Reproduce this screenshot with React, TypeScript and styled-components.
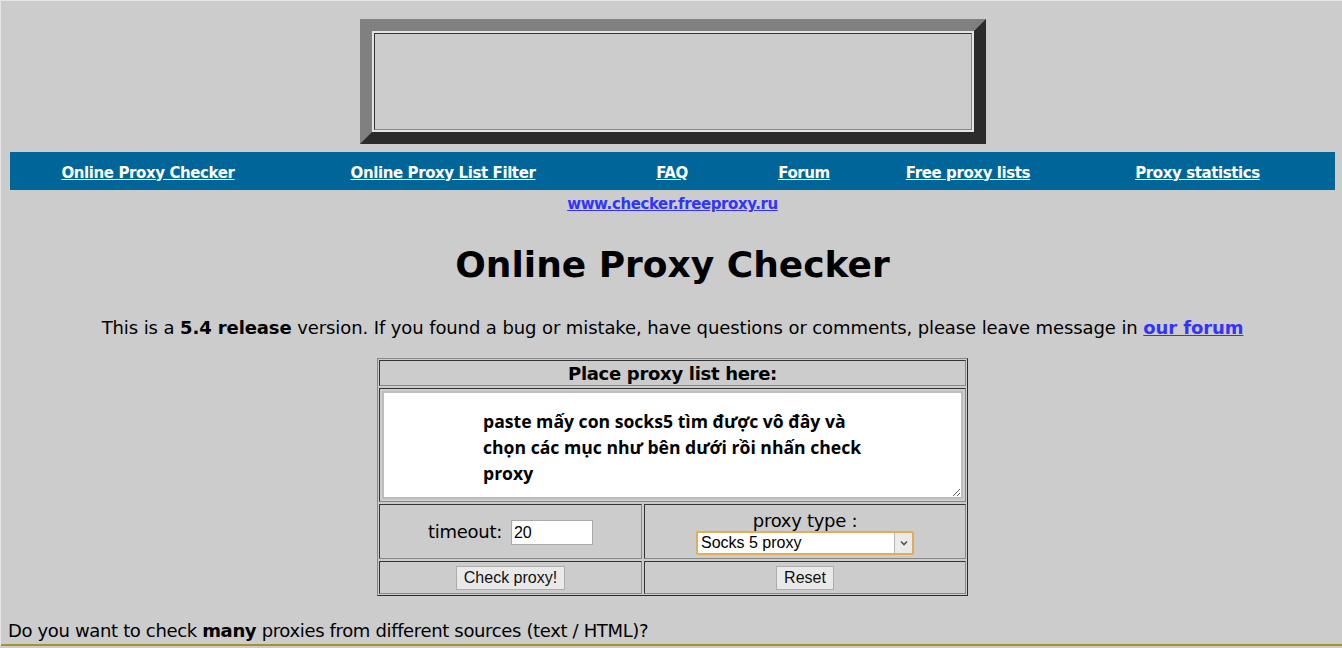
import React, { useState } from "react";
import styled, { createGlobalStyle } from "styled-components";

const GlobalStyle = createGlobalStyle`
    html, body {
        margin: 0;
        padding: 0;
        background: #cccccc;
    }
    body {
        font-family: "DejaVu Sans", Verdana, sans-serif;
        color: #000;
        border-left: 1px solid #e6e6e6;
        border-top: 1px solid #e6e6e6;
    }
`;

const StyledPage = styled.div`
    display: flex;
    flex-direction: column;
    align-items: center;
    padding: 18px 7px 0 9px;
`;

const StyledBanner = styled.div`
    width: 602px;
    height: 101px;
    border: 12px solid;
    border-color: #808080 #2b2b2b #2b2b2b #808080;
`;
const StyledBannerInner = styled.div`
    height: 100%;
    box-sizing: border-box;
    border: 2px solid #e4e4e4;
`;
const StyledBannerCell = styled.div`
    height: 100%;
    box-sizing: border-box;
    border: 1px solid;
    border-color: #333 #888 #888 #333;
`;

const StyledNav = styled.nav`
    align-self: stretch;
    margin-top: 8px;
    height: 38px;
    padding-right: 12px;
    padding-top: 3px;
    box-sizing: border-box;
    background: #006699;
    display: grid;
    grid-template-columns: 276px 314px 144px 120px 208px 1fr;
    align-items: center;
    justify-items: center;
`;
const StyledNavLink = styled.a`
    color: #fff;
    font-weight: bold;
    font-size: 15px;
    letter-spacing: -0.4px;
    text-decoration: underline;
`;

const StyledSiteLink = styled.a`
    margin-top: 5px;
    color: #3333ff;
    font-weight: bold;
    font-size: 15px;
    letter-spacing: -0.4px;
    text-decoration: underline;
`;

const StyledTitle = styled.h1`
    margin: 29px 0 0;
    font-size: 36px;
    line-height: 46px;
    font-weight: bold;
`;

const StyledIntro = styled.p`
    margin: 28px 0 0;
    font-size: 18px;
    letter-spacing: -0.1px;
    line-height: 24px;
    a {
        color: #3333ff;
        font-weight: bold;
    }
`;

const StyledForm = styled.div`
    margin-top: 18px;
    display: grid;
    grid-template-columns: 263px 322px;
    grid-template-rows: 26px 114px 55px 33px;
    gap: 2px;
    padding: 1px;
    border: 1px solid;
    border-color: #888 #2b2b2b #2b2b2b #888;
`;
const StyledCell = styled.div<{ $span?: boolean; $column?: boolean }>`
    grid-column: ${(p) => (p.$span ? "1 / span 2" : "auto")};
    border: 1px solid;
    border-color: #333 #888 #888 #333;
    display: flex;
    flex-direction: ${(p) => (p.$column ? "column" : "row")};
    align-items: center;
    justify-content: center;
    font-size: 18px;
    letter-spacing: -0.3px;
`;
const StyledCellHeader = styled(StyledCell)`
    font-weight: bold;
    padding-top: 1px;
`;
const StyledTextCell = styled(StyledCell)`
    padding: 2px;
    align-items: stretch;
`;
const StyledTextArea = styled.textarea`
    flex: 1;
    resize: both;
    border: 2px solid #bdbdbd;
    background: #fff;
    padding: 15px 80px 0 99px;
    font-family: "Open Sans", "Noto Sans", sans-serif;
    font-weight: bold;
    font-size: 17.6px;
    line-height: 26px;
    color: #000;
    outline: none;
    overflow: hidden;
`;
const StyledInput = styled.input`
    margin-left: 9px;
    margin-top: 2px;
    width: 82px;
    height: 25px;
    box-sizing: border-box;
    padding: 1px 2px;
    border: 1px solid #aaa;
    font-family: "Liberation Sans", Arial, sans-serif;
    font-size: 16px;
`;
const StyledTypeLabel = styled.div`
    margin-top: 1px;
    line-height: 21px;
`;
const StyledSelectWrap = styled.div`
    position: relative;
    width: 218px;
    height: 24px;
`;
const StyledSelect = styled.select`
    appearance: none;
    width: 100%;
    height: 100%;
    box-sizing: border-box;
    border: 2px solid #e1ad55;
    border-radius: 2px;
    background: #fff;
    font-family: "Liberation Sans", Arial, sans-serif;
    font-size: 16px;
    padding: 0 22px 0 3px;
    color: #000;
    outline: none;
`;
const StyledSelectArrow = styled.span`
    position: absolute;
    top: 2px;
    right: 2px;
    bottom: 2px;
    width: 18px;
    box-sizing: border-box;
    border-left: 1px solid #b5b5b5;
    background: #ebebeb;
    display: flex;
    align-items: center;
    justify-content: center;
    pointer-events: none;
`;
const StyledButton = styled.button`
    height: 24px;
    margin-top: 1px;
    padding: 0 7px;
    border: 1px solid #adadad;
    background: #e9e9e9;
    font-family: "Liberation Sans", Arial, sans-serif;
    font-size: 16px;
    color: #111;
`;

const StyledFooter = styled.p`
    align-self: stretch;
    margin: 23px -7px 0 -9px;
    padding: 0 0 1px 7px;
    font-size: 18px;
    letter-spacing: -0.35px;
    line-height: 24px;
    border-bottom: 2px solid #a8922a;
`;

const navLinks = [
    "Online Proxy Checker",
    "Online Proxy List Filter",
    "FAQ",
    "Forum",
    "Free proxy lists",
    "Proxy statistics",
];

export default function App() {
    const [text, setText] = useState(
        "paste mấy con socks5 tìm được vô đây và\nchọn các mục như bên dưới rồi nhấn check\nproxy"
    );
    const [timeout, setTimeoutValue] = useState("20");
    const [proxyType, setProxyType] = useState("socks5");

    function handleReset() {
        setText("");
        setTimeoutValue("20");
        setProxyType("socks5");
    }

    return (
        <>
            <GlobalStyle />
            <StyledPage>
                <StyledBanner>
                    <StyledBannerInner>
                        <StyledBannerCell />
                    </StyledBannerInner>
                </StyledBanner>
                <StyledNav>
                    {navLinks.map((label) => (
                        <StyledNavLink key={label} href="#">
                            {label}
                        </StyledNavLink>
                    ))}
                </StyledNav>
                <StyledSiteLink href="#">www.checker.freeproxy.ru</StyledSiteLink>
                <StyledTitle>Online Proxy Checker</StyledTitle>
                <StyledIntro>
                    This is a <b>5.4 release</b> version. If you found a bug or mistake, have questions or comments, please leave message in <a href="#">our forum</a>
                </StyledIntro>
                <StyledForm>
                    <StyledCellHeader $span>Place proxy list here:</StyledCellHeader>
                    <StyledTextCell $span>
                        <StyledTextArea value={text} onChange={(e) => setText(e.target.value)} />
                    </StyledTextCell>
                    <StyledCell>
                        timeout:
                        <StyledInput value={timeout} onChange={(e) => setTimeoutValue(e.target.value)} />
                    </StyledCell>
                    <StyledCell $column>
                        <StyledTypeLabel>proxy type :</StyledTypeLabel>
                        <StyledSelectWrap>
                            <StyledSelect value={proxyType} onChange={(e) => setProxyType(e.target.value)}>
                                <option value="http">HTTP proxy</option>
                                <option value="socks4">Socks 4 proxy</option>
                                <option value="socks5">Socks 5 proxy</option>
                            </StyledSelect>
                            <StyledSelectArrow>
                                <svg width="8" height="6" viewBox="0 0 8 6">
                                    <path d="M1 1.5 L4 4.5 L7 1.5" fill="none" stroke="#555" strokeWidth="1.6" />
                                </svg>
                            </StyledSelectArrow>
                        </StyledSelectWrap>
                    </StyledCell>
                    <StyledCell>
                        <StyledButton>Check proxy!</StyledButton>
                    </StyledCell>
                    <StyledCell>
                        <StyledButton onClick={handleReset}>Reset</StyledButton>
                    </StyledCell>
                </StyledForm>
                <StyledFooter>
                    Do you want to check <b>many</b> proxies from different sources (text / HTML)?
                </StyledFooter>
            </StyledPage>
        </>
    );
}
